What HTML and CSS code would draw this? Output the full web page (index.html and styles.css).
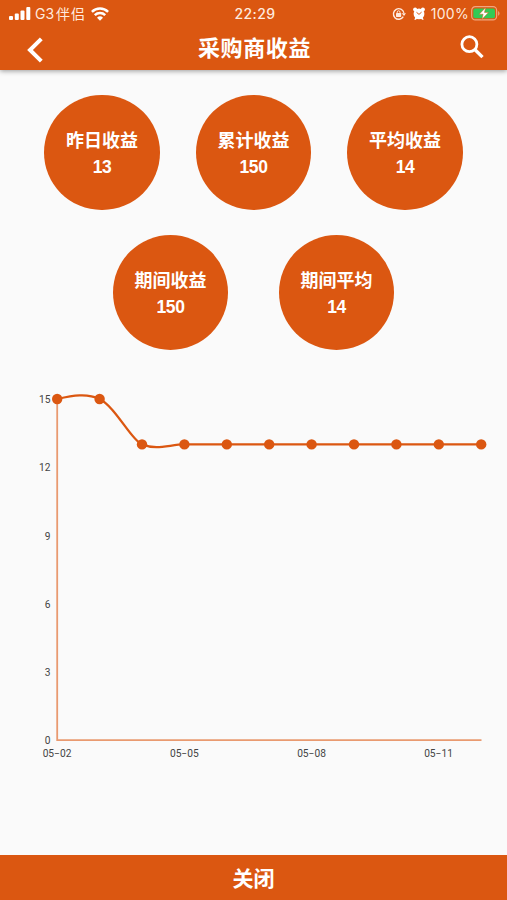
FILE: index.html
```html
<!DOCTYPE html>
<html lang="zh-CN">
<head>
<meta charset="utf-8">
<meta name="viewport" content="width=device-width, initial-scale=1">
<title>采购商收益</title>
<link rel="stylesheet" href="styles.css">
</head>
<body>
<div class="screen">
  <header class="header">
    <div class="status">
      <div class="status-left">
        <svg class="signal" width="22" height="14" viewBox="0 0 22 14" fill="currentColor"><rect x="0" y="9" width="4" height="4" rx="1"/><rect x="5.8" y="6.5" width="4" height="6.5" rx="1"/><rect x="11.5" y="3.5" width="4" height="9.5" rx="1"/><rect x="17.3" y="0" width="4" height="13" rx="1"/></svg>
        <span class="carrier">G3<span class="carrier-name">伴侣</span></span>
        <svg class="wifi" width="18" height="14" viewBox="0 0 18 14"><g fill="none" stroke="currentColor" stroke-width="2.5"><path d="M.9 4.9a11.5 11.5 0 0 1 16.2 0"/><path d="M3.8 8.2a7.4 7.4 0 0 1 10.4 0"/></g><path d="M9 13.8 6 10.8a4.3 4.3 0 0 1 6 0z" fill="currentColor"/></svg>
      </div>
      <div class="time">22:29</div>
      <div class="status-right">
        <svg class="lock" width="14" height="14" viewBox="0 0 14 14"><path d="M11.3 9.700A5.300 5.300 0 1 1 11.900 5.800" fill="none" stroke="currentColor" stroke-width="1.4"/><path d="M9.700 6.200h4.300L12 9z" fill="currentColor"/><rect x="4" y="6" width="5.200" height="3.900" rx=".6" fill="currentColor"/><path d="M5.200 6.300V5.200a1.400 1.400 0 0 1 2.800 0v1.100" fill="none" stroke="currentColor"/></svg>
        <svg class="alarm" width="12" height="13" viewBox="0 0 12 13"><g fill="currentColor"><circle cx="6" cy="6.900" r="5.400"/><circle cx="2.100" cy="2.500" r="2"/><circle cx="9.900" cy="2.500" r="2"/><path d="m1.300 12.700 1.300-3h6.800l1.300 3-1.600.1-1.500-1.500H4.400l-1.500 1.500z"/></g><path class="alarm-hands" d="M3.500 5.300 6 7.400l2.600-2.300" fill="none" stroke-width="1"/></svg>
        <span class="percent">100%</span>
        <svg class="battery" width="30" height="15" viewBox="0 0 31 15" preserveAspectRatio="none"><rect class="battery-case" x=".7" y=".7" width="25.8" height="13.2" rx="3.7"/><path class="battery-cap" d="M28 5v4.8a2.7 2.7 0 0 0 0-4.8z"/><rect class="battery-level" x="2.4" y="2.4" width="22.4" height="9.8" rx="2"/><path class="battery-bolt" d="m15.2 1.5-6.7 6.700h4l-1.200 5.100 6.800-6.900h-4.200z"/></svg>
      </div>
    </div>
    <nav class="nav">
      <svg class="back" width="16" height="26" viewBox="0 0 16 26" fill="none" stroke="currentColor" stroke-width="4"><path d="M14.3 1.8 3 13l11.3 11.2"/></svg>
      <h1 class="title">采购商收益</h1>
      <svg class="search" width="24" height="24" viewBox="0 0 24 24" fill="none" stroke="currentColor"><circle cx="9.400" cy="9.200" r="7.500" stroke-width="2.8"/><path d="m14.800 14.500 7.700 7.700" stroke-width="3.300"/></svg>
    </nav>
  </header>
  <main class="content">
    <section class="row">
      <div class="stat"><span class="label">昨日收益</span><span class="value">13</span></div>
      <div class="stat"><span class="label">累计收益</span><span class="value">150</span></div>
      <div class="stat"><span class="label">平均收益</span><span class="value">14</span></div>
    </section>
    <section class="row row-pair">
      <div class="stat"><span class="label">期间收益</span><span class="value">150</span></div>
      <div class="stat"><span class="label">期间平均</span><span class="value">14</span></div>
    </section>
    <svg class="chart" width="507" height="400" viewBox="0 0 507 400">
      <path class="axis" d="M57.2 19V360.2H481.5"/>
      <path class="line" d="M57.2 19C73 15.500 87 13 99.600 19C116 27.500 131 60 142 64.400C157 70.500 170 64.400 184.400 64.400H481.200"/>
      <g class="dots"><circle cx="57.2" cy="19" r="5.2"/><circle cx="99.6" cy="19" r="5.2"/><circle cx="142" cy="64.4" r="5.2"/><circle cx="184.4" cy="64.4" r="5.2"/><circle cx="226.8" cy="64.4" r="5.2"/><circle cx="269.2" cy="64.4" r="5.2"/><circle cx="311.6" cy="64.4" r="5.2"/><circle cx="354" cy="64.4" r="5.2"/><circle cx="396.4" cy="64.4" r="5.2"/><circle cx="438.8" cy="64.4" r="5.2"/><circle cx="481.2" cy="64.4" r="5.2"/></g>
      <g class="ticks ticks-y"><text x="50.5" y="23">15</text><text x="50.5" y="91.2">12</text><text x="50.5" y="159.5">9</text><text x="50.5" y="228">6</text><text x="50.5" y="296">3</text><text x="50.5" y="364.2">0</text></g>
      <g class="ticks ticks-x"><text x="57" y="377">05−02</text><text x="184.3" y="377">05−05</text><text x="311.5" y="377">05−08</text><text x="438.5" y="377">05−11</text></g>
    </svg>
  </main>
  <button class="close" type="button">关闭</button>
</div>
</body>
</html>
```
FILE: styles.css
```css
:root {
  --brand: #db5711;
  --paper: #fafafa;
  --kai: "Kaiti SC", STKaiti, KaiTi, "Noto Sans CJK SC", sans-serif;
}

* { box-sizing: border-box; }

body { margin: 0; background: var(--paper); }

svg { display: block; flex: none; }

.screen {
  display: flex;
  flex-direction: column;
  width: 507px;
  height: 900px;
  overflow: hidden;
  font-family: Inter, "Noto Sans CJK SC", sans-serif;
}

.header {
  flex: none;
  height: 70px;
  background: var(--brand);
  color: #fff;
  box-shadow: 0 1px 5px rgba(0, 0, 0, .4);
}

.status {
  display: grid;
  grid-template-columns: 1fr auto 1fr;
  align-items: center;
  height: 27px;
  padding: 0 6px 0 9px;
  color: #ffeadf;
  font-size: 14px;
  line-height: 20px;
}

.status-left, .status-right { display: flex; align-items: center; }
.status-right { justify-content: flex-end; }
.signal, .wifi { color: #fff; }
.carrier { margin-left: 4px; white-space: nowrap; }
.carrier-name { margin-left: 2px; letter-spacing: 1px; }
.wifi { margin-left: 5px; }
.time { font-weight: 500; letter-spacing: .45px; }
.lock { margin-right: 7px; }
.alarm { margin-right: 6px; color: #fff; }
.alarm-hands { stroke: var(--brand); }
.percent { margin-right: 2px; letter-spacing: .3px; }
.battery-case { fill: none; stroke: #f0a67f; stroke-width: 1.2; }
.battery-cap { fill: #f0a67f; }
.battery-level { fill: #32ca55; }
.battery-bolt { fill: #fff; stroke: var(--brand); stroke-width: .5; }

.nav {
  display: grid;
  grid-template-columns: 1fr auto 1fr;
  align-items: center;
  height: 43px;
  padding: 0 23px 0 27px;
}

.back { margin-top: 2px; }
.search { justify-self: end; margin-top: -3px; }

.title {
  margin: -5px 0 0 -2px;
  font-family: var(--kai);
  font-size: 22px;
  font-weight: 700;
  line-height: 38px;
  letter-spacing: .6px;
}

.content { flex: 1; min-height: 0; }

.row {
  display: flex;
  justify-content: center;
  gap: 36px;
  padding-top: 24.5px;
}

.row-pair { gap: 50.5px; }

.stat {
  display: flex;
  flex-direction: column;
  align-items: center;
  width: 115.5px;
  height: 115.5px;
  padding-top: 31px;
  border-radius: 50%;
  background: var(--brand);
  color: #fff;
}

.label {
  font-family: var(--kai);
  font-size: 18px;
  font-weight: 700;
  line-height: 26px;
}

.value {
  font-family: "Liberation Sans", Arial, sans-serif;
  font-size: 17.5px;
  font-weight: 700;
  line-height: 30px;
  letter-spacing: -.4px;
}

.chart { margin-top: 30px; }
.axis { fill: none; stroke: #e99a70; stroke-width: 1.8; }
.line { fill: none; stroke: var(--brand); stroke-width: 2.3; }
.dots { fill: var(--brand); }
.ticks { fill: #444; font-family: Roboto, sans-serif; font-size: 10.2px; }
.ticks-y { text-anchor: end; }
.ticks-x { text-anchor: middle; }

.close {
  flex: none;
  height: 45px;
  padding: 0;
  border: 0;
  background: var(--brand);
  color: #fff;
  font-family: var(--kai);
  font-size: 21px;
  font-weight: 700;
  line-height: 45px;
}
```
